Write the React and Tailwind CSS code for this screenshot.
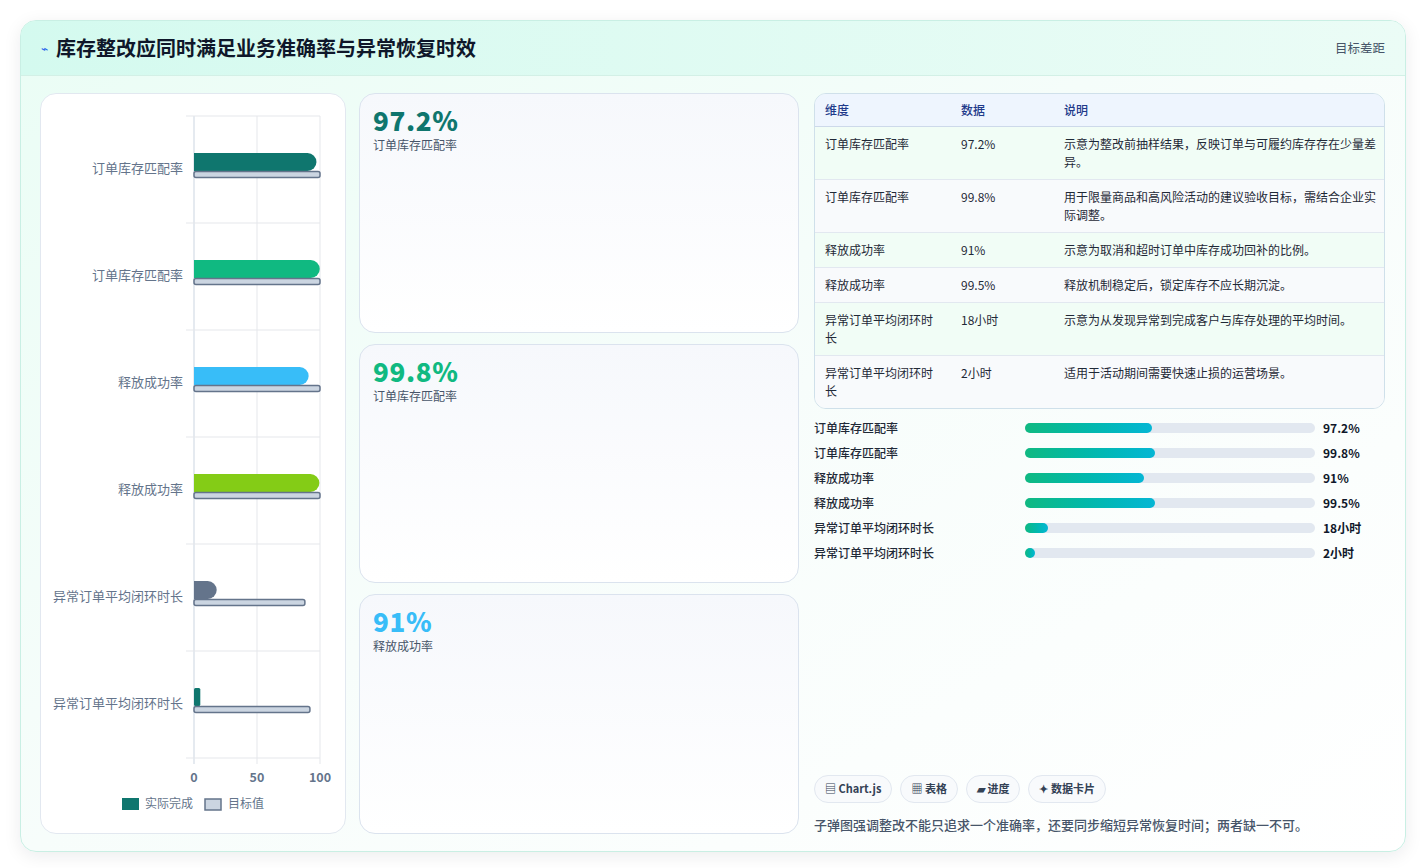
import React from "react";

const rows = [
  { l: "订单库存匹配率", a: 97.2, t: 100, c: "#0f766e" },
  { l: "订单库存匹配率", a: 99.8, t: 100, c: "#10b981" },
  { l: "释放成功率", a: 91, t: 100, c: "#38bdf8" },
  { l: "释放成功率", a: 99.5, t: 100, c: "#84cc16" },
  { l: "异常订单平均闭环时长", a: 18, t: 88, c: "#64748b" },
  { l: "异常订单平均闭环时长", a: 5, t: 92, c: "#0f766e" },
];

function Chart() {
  const x0 = 153, w = 126, top = 22, rh = 107;
  const sx = (v) => (v / 100) * w;
  return (
    <svg width="305" height="739" className="block">
      {[0, 50, 100].map((v) => (
        <line key={v} x1={x0 + sx(v)} x2={x0 + sx(v)} y1={top} y2={top + rh * 6 + 6} stroke={v === 0 ? "#cbd5e1" : "#e5e7eb"} />
      ))}
      {[0, 1, 2, 3, 4, 5, 6].map((i) => (
        <line key={i} x1={x0 - 8} x2={x0 + w} y1={top + rh * i} y2={top + rh * i} stroke="#e5e7eb" />
      ))}
      {rows.map((r, i) => {
        const cy = top + rh * i + 53;
        const aw = sx(r.a);
        return (
          <g key={i}>
            <text x={x0 - 11} y={cy + 4} textAnchor="end" fontSize="13" fill="#64748b">{r.l}</text>
            {aw > 12 ? (
              <path d={`M${x0} ${cy - 16} H${x0 + aw - 9} A9 9 0 0 1 ${x0 + aw} ${cy - 7} A9 9 0 0 1 ${x0 + aw - 9} ${cy + 2} H${x0} Z`} fill={r.c} />
            ) : (
              <rect x={x0} y={cy - 16} width={aw} height={18} rx="1.5" fill={r.c} />
            )}
            <rect x={x0} y={cy + 2.5} width={sx(r.t)} height={6} rx="2" fill="#cbd5e1" stroke="#64748b" strokeWidth="1.5" />
          </g>
        );
      })}
      {[0, 50, 100].map((v) => (
        <text key={v} x={x0 + sx(v)} y={688} textAnchor="middle" fontSize="12.5" fontWeight="600" fill="#64748b">{v}</text>
      ))}
      <rect x="81" y="704" width="17" height="12" fill="#0f766e" />
      <text x="104" y="714" fontSize="12" fill="#64748b">实际完成</text>
      <rect x="164" y="705" width="16" height="11" fill="#cbd5e1" stroke="#64748b" strokeWidth="1.5" />
      <text x="187" y="714" fontSize="12" fill="#64748b">目标值</text>
    </svg>
  );
}

const table = [
  ["订单库存匹配率", "97.2%", "示意为整改前抽样结果，反映订单与可履约库存存在少量差异。"],
  ["订单库存匹配率", "99.8%", "用于限量商品和高风险活动的建议验收目标，需结合企业实际调整。"],
  ["释放成功率", "91%", "示意为取消和超时订单中库存成功回补的比例。"],
  ["释放成功率", "99.5%", "释放机制稳定后，锁定库存不应长期沉淀。"],
  ["异常订单平均闭环时长", "18小时", "示意为从发现异常到完成客户与库存处理的平均时间。"],
  ["异常订单平均闭环时长", "2小时", "适用于活动期间需要快速止损的运营场景。"],
];

const prog = [
  ["订单库存匹配率", 127, "97.2%"],
  ["订单库存匹配率", 130, "99.8%"],
  ["释放成功率", 119, "91%"],
  ["释放成功率", 130, "99.5%"],
  ["异常订单平均闭环时长", 23, "18小时"],
  ["异常订单平均闭环时长", 10, "2小时"],
];

const cards = [
  ["97.2%", "订单库存匹配率", "text-[#0f766e]"],
  ["99.8%", "订单库存匹配率", "text-[#10b981]"],
  ["91%", "释放成功率", "text-[#38bdf8]"],
];

export default function App() {
  return (
    <div className="w-[1426px] h-[868px] bg-white p-5 pb-4" style={{ fontFamily: '"Noto Sans CJK SC", "Noto Sans", sans-serif' }}>
      <div className="h-[832px] rounded-2xl border border-[#c9efe4] bg-gradient-to-br from-[#eafdf5] via-[#f7fdfb] to-white shadow-[0_4px_18px_rgba(15,23,42,0.08)] overflow-hidden flex flex-col">
        <div className="h-[55px] shrink-0 flex items-center justify-between px-5 bg-gradient-to-r from-[#d4faef] to-[#ebfcf6] border-b border-[#d3f0e6]">
          <div className="flex items-center gap-2">
            <span className="text-[#2563eb] text-xs">⌁</span>
            <span className="text-[20px] font-bold text-[#0f172a]">库存整改应同时满足业务准确率与异常恢复时效</span>
          </div>
          <span className="text-[12.5px] text-[#475569]">目标差距</span>
        </div>
        <div className="flex-1 flex gap-[13px] px-[19px] pt-[17px] pb-[18px]">
          <div className="w-[306px] rounded-2xl border border-[#e2e8f0] bg-white">
            <Chart />
          </div>
          <div className="w-[440px] flex flex-col gap-[11px]">
            {cards.map(([v, l, c], i) => (
              <div key={i} className="flex-1 rounded-2xl border border-[#dbe3ee] bg-gradient-to-b from-[#f6f8fc] to-white px-[13px] pt-[10px]">
                <div className={`text-[26px] font-extrabold leading-[32px] tracking-wide ${c}`}>{v}</div>
                <div className="text-xs text-[#475569] mt-[1px]">{l}</div>
              </div>
            ))}
          </div>
          <div className="flex-1 flex flex-col pl-[2px] pr-[1px]">
            <div className="rounded-xl border border-[#cfe0ea] overflow-hidden text-xs text-[#1f2937]">
              <div className="flex h-[33px] items-center bg-[#eef5fe] border-b border-[#cdd9ea] text-[#1e3a8a] font-medium">
                <div className="w-[146px] pl-[10px]">维度</div>
                <div className="w-[103px]">数据</div>
                <div className="flex-1">说明</div>
              </div>
              {table.map((r, i) => (
                <div key={i} className={`flex py-[8px] border-b border-[#e2e8f0] last:border-b-0 leading-[18px] ${i % 2 === 0 ? "bg-[#f1fdf6]" : "bg-[#f8fafc]"}`}>
                  <div className="w-[146px] pl-[10px] pr-[26px]">{r[0]}</div>
                  <div className="w-[103px]">{r[1]}</div>
                  <div className="flex-1 pr-2">{r[2]}</div>
                </div>
              ))}
            </div>
            <div className="mt-[6px] flex flex-col">
              {prog.map(([l, w, v], i) => (
                <div key={i} className="flex items-center h-[25px] text-xs text-[#1f2937] font-medium">
                  <div className="w-[211px]">{l}</div>
                  <div className="w-[290px] h-[10px] rounded-full bg-[#e2e8f0]">
                    <div className="h-full rounded-full bg-gradient-to-r from-[#10b981] to-[#06b6d4]" style={{ width: w }} />
                  </div>
                  <div className="pl-[8px] font-bold text-[#0f172a]">{v}</div>
                </div>
              ))}
            </div>
            <div className="flex-1" />
            <div className="flex gap-2 text-[11px] font-semibold text-[#334155]">
              {["▤ Chart.js", "▦ 表格", "▰ 进度", "✦ 数据卡片"].map((t) => (
                <span key={t} className="h-[28px] px-[10px] flex items-center rounded-full border border-[#e2e8f0] bg-[#f8fafc]">{t}</span>
              ))}
            </div>
            <div className="mt-[12px] text-[13px] text-[#475569] font-medium">子弹图强调整改不能只追求一个准确率，还要同步缩短异常恢复时间；两者缺一不可。</div>
          </div>
        </div>
      </div>
    </div>
  );
}
